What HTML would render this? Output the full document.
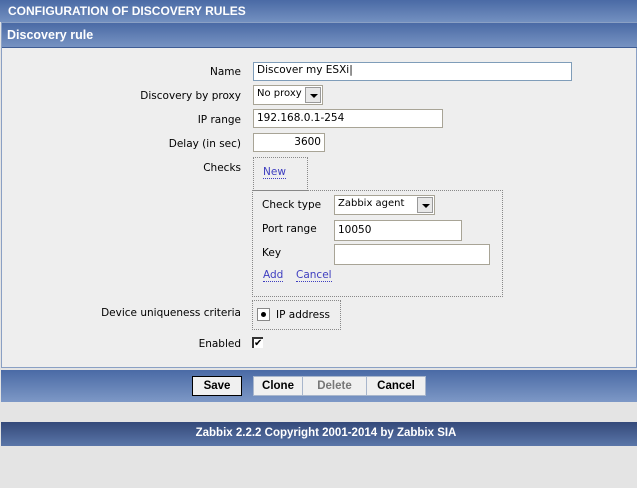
<!DOCTYPE html>
<html><head><style>
*{margin:0;padding:0;box-sizing:border-box}
body{width:637px;height:488px;background:#e4e4e4;font-family:"DejaVu Sans","Liberation Sans",sans-serif;font-size:10.5px;color:#000;position:relative;overflow:hidden}
.a{position:absolute}
.b{font-family:"Liberation Sans",sans-serif;font-weight:bold}
.hdr{left:0;top:0;width:637px;height:22px;background:linear-gradient(#4a6aa5,#7390c0);color:#fff;font-size:12px;padding:4px 0 0 8px}
.panel{left:1px;top:22px;width:636px;height:346px;background:#eeeeee;border:1px solid #8aa0c4}
.sub{left:2px;top:23px;width:635px;height:25px;background:linear-gradient(#4a6aa5,#7793c2);color:#fff;font-size:12.5px;padding:5px 0 0 5px;border-bottom:1px solid #3f5d95}
.lbl{text-align:right;width:241px;left:0}
.in{background:#fff;border:1px solid #a8a496;padding:1px 0 0 3px;height:19px}
.sel{background:#fff;border:1px solid #a8a496;padding:2px 0 0 3px;height:20px;font-size:10px}
.arr{position:absolute;right:1px;top:1px;width:16px;height:16px;background:#e8e8e8;border:1px solid #999}
.arr:after{content:"";position:absolute;left:4px;top:6px;border-left:4px solid transparent;border-right:4px solid transparent;border-top:4px solid #000}
.dot{border:1px dotted #888}
.lnk{color:#3e3ec0;border-bottom:1px dotted #3e3ec0;line-height:12px}
.bar{left:1px;top:370px;width:636px;height:32px;background:linear-gradient(#4a6aa5,#7d98c6)}
.btn{top:376px;height:20px;background:#f0f0f0;border:1px solid #a8b6cc;text-align:center;padding-top:3px;font-size:11.5px}
.foot{left:1px;top:422px;width:636px;height:24px;background:linear-gradient(#34497a,#5a76a8);color:#fff;text-align:center;padding:5px 0 0 14px;font-size:11.5px}
</style></head><body>
<div class="a hdr b">CONFIGURATION OF DISCOVERY RULES</div>
<div class="a panel"></div>
<div class="a sub b">Discovery rule</div>

<div class="a lbl" style="top:66px">Name</div>
<div class="a in" style="left:253px;top:62px;width:319px;border-color:#7f9db9">Discover my ESXi|</div>
<div class="a lbl" style="top:90px">Discovery by proxy</div>
<div class="a sel" style="left:253px;top:85px;width:70px">No proxy<span class="arr"></span></div>
<div class="a lbl" style="top:114px">IP range</div>
<div class="a in" style="left:253px;top:109px;width:190px;padding-top:2px">192.168.0.1-254</div>
<div class="a lbl" style="top:138px">Delay (in sec)</div>
<div class="a in" style="left:253px;top:133px;width:72px;text-align:right;padding:2px 3px 0 0">3600</div>
<div class="a lbl" style="top:162px">Checks</div>
<div class="a dot" style="left:253px;top:157px;width:55px;height:34px"></div>
<div class="a lnk" style="left:263px;top:166px">New</div>
<div class="a dot" style="left:252px;top:190px;width:251px;height:107px"></div>
<div class="a" style="left:262px;top:199px">Check type</div>
<div class="a sel" style="left:334px;top:195px;width:101px">Zabbix agent<span class="arr"></span></div>
<div class="a" style="left:262px;top:223px">Port range</div>
<div class="a in" style="left:334px;top:220px;width:128px;height:21px;padding-top:3px">10050</div>
<div class="a" style="left:262px;top:247px">Key</div>
<div class="a in" style="left:334px;top:244px;width:156px;height:21px"></div>
<div class="a lnk" style="left:263px;top:269px">Add</div>
<div class="a lnk" style="left:296px;top:269px">Cancel</div>
<div class="a lbl" style="top:307px">Device uniqueness criteria</div>
<div class="a dot" style="left:252px;top:300px;width:89px;height:30px"></div>
<div class="a" style="left:257px;top:308px;width:13px;height:13px;background:#fff;border:1px solid #888"><div style="position:absolute;left:3px;top:3px;width:5px;height:5px;border-radius:50%;background:#000"></div></div>
<div class="a" style="left:276px;top:309px">IP address</div>
<div class="a lbl" style="top:338px">Enabled</div>
<div class="a" style="left:252px;top:337px;width:11px;height:11px;background:#fff;border-left:2px solid #333;border-top:2px solid #333;font-size:10px;line-height:9px;font-weight:bold">✔</div>

<div class="a bar"></div>
<div class="a btn b" style="left:192px;width:50px;border:1px solid #000">Save</div>
<div class="a btn b" style="left:253px;width:50px">Clone</div>
<div class="a btn b" style="left:302px;width:65px;color:#777">Delete</div>
<div class="a btn b" style="left:366px;width:60px">Cancel</div>
<div class="a foot b">Zabbix 2.2.2 Copyright 2001-2014 by Zabbix SIA</div>
</body></html>
